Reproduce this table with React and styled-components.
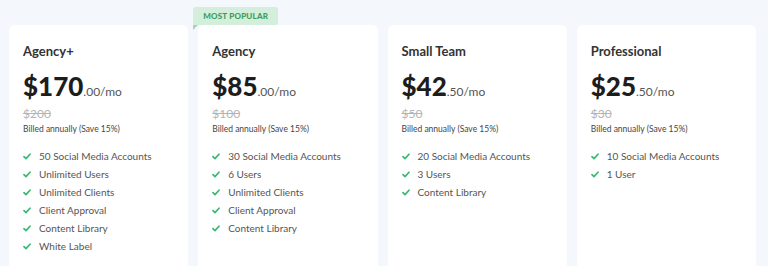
import styled, { createGlobalStyle } from "styled-components";

const plans = [
  {
    name: "Agency+",
    price: "170",
    cents: ".00",
    was: "$200",
    features: [
      "50 Social Media Accounts",
      "Unlimited Users",
      "Unlimited Clients",
      "Client Approval",
      "Content Library",
      "White Label",
    ],
  },
  {
    name: "Agency",
    price: "85",
    cents: ".00",
    was: "$100",
    popular: true,
    features: [
      "30 Social Media Accounts",
      "6 Users",
      "Unlimited Clients",
      "Client Approval",
      "Content Library",
    ],
  },
  {
    name: "Small Team",
    price: "42",
    cents: ".50",
    was: "$50",
    features: ["20 Social Media Accounts", "3 Users", "Content Library"],
  },
  {
    name: "Professional",
    price: "25",
    cents: ".50",
    was: "$30",
    features: ["10 Social Media Accounts", "1 User"],
  },
];

const GlobalStyle = createGlobalStyle`
  html, body {
    margin: 0;
    background: #f4f7fc;
    overflow: hidden;
  }
  body {
    font-family: Lato, "Liberation Sans", sans-serif;
    color: #333;
  }
`;

const Grid = styled.div`
  display: grid;
  grid-template-columns: repeat(4, 1fr);
  gap: 10px;
  width: 747px;
  height: 241px;
  padding: 25px 0 0 9px;
`;

const Card = styled.div`
  position: relative;
  background: #fff;
  border-radius: 6px 6px 0 0;
  padding: 18px 14px 0;
`;

const Badge = styled.div`
  position: absolute;
  top: -18px;
  left: -5px;
  height: 18px;
  padding: 0 10px;
  display: flex;
  align-items: center;
  background: #d3eedb;
  color: #3a9d5d;
  font-size: 8px;
  font-weight: 900;
  letter-spacing: 0.2px;
  border-radius: 3px 3px 3px 0;

  &::after {
    content: "";
    position: absolute;
    left: 0;
    top: 18px;
    border-top: 5px solid #a9d4b6;
    border-left: 5px solid transparent;
    transform: scaleX(-1);
  }
`;

const Title = styled.div`
  font-size: 13px;
  font-weight: 700;
  color: #333;
  line-height: 16px;
`;

const PriceRow = styled.div`
  display: flex;
  align-items: baseline;
  margin-top: 12px;
  line-height: 30px;
`;

const Amount = styled.span`
  font-size: 26px;
  font-weight: 900;
  color: #1d1d1d;
`;

const Cents = styled.span`
  font-size: 12px;
  color: #555;
`;

const Was = styled.div`
  font-size: 12px;
  color: #b5b5b5;
  text-decoration: line-through;
  line-height: 14px;
`;

const Billed = styled.div`
  font-size: 8.5px;
  color: #444;
  margin-top: 2px;
  line-height: 12px;
`;

const Features = styled.ul`
  list-style: none;
  margin: 12px 0 0;
  padding: 0;
  display: flex;
  flex-direction: column;
`;

const Feature = styled.li`
  display: flex;
  align-items: center;
  gap: 8px;
  height: 18px;
  font-size: 10px;
  color: #555;
`;

const Check = () => (
  <svg width="8" height="7" viewBox="0 0 8 7">
    <path
      d="M1 3.6 L3 5.6 L7 1.2"
      fill="none"
      stroke="#3bb873"
      strokeWidth="1.7"
      strokeLinecap="round"
      strokeLinejoin="round"
    />
  </svg>
);

export default function App() {
  return (
    <>
      <GlobalStyle />
      <Grid>
        {plans.map((p) => (
          <Card key={p.name}>
            {p.popular && <Badge>MOST POPULAR</Badge>}
            <Title>{p.name}</Title>
            <PriceRow>
              <Amount>${p.price}</Amount>
              <Cents>{p.cents}/mo</Cents>
            </PriceRow>
            <Was>{p.was}</Was>
            <Billed>Billed annually (Save 15%)</Billed>
            <Features>
              {p.features.map((f) => (
                <Feature key={f}>
                  <Check />
                  {f}
                </Feature>
              ))}
            </Features>
          </Card>
        ))}
      </Grid>
    </>
  );
}
